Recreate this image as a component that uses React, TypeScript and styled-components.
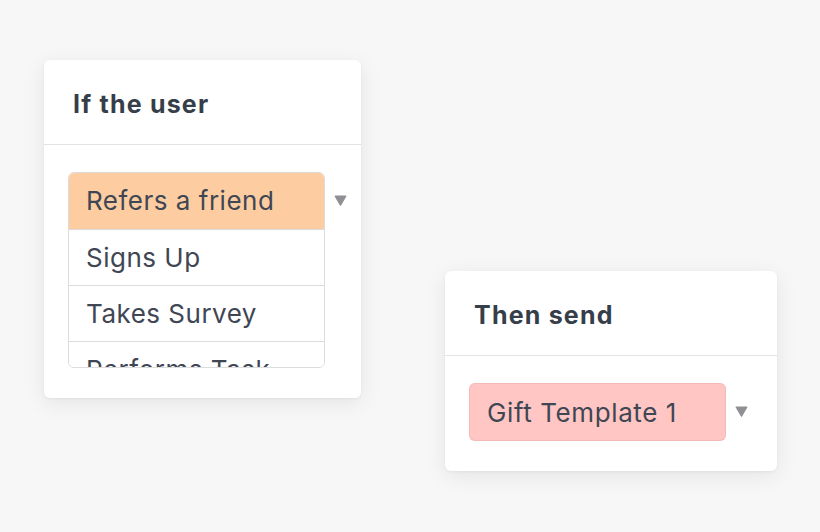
import React from "react";
import styled, { createGlobalStyle } from "styled-components";

const GlobalStyle = createGlobalStyle`
    html, body {
        margin: 0;
        padding: 0;
        background: #f7f7f7;
    }

    body {
        font-family: Inter, "Noto Sans", sans-serif;
        color: #3b4350;
    }
`;

interface CardProps {
    $width: number;
    $offset?: number;
};

interface OptionProps {
    $selected?: boolean;
};

interface SelectProps {
    $color: string;
};

const Page = styled.main`
    display: flex;
    align-items: flex-start;
    gap: 84px;
    padding: 60px 0 0 44px;
    width: 820px;
    height: 532px;
    box-sizing: border-box;
`;

const Card = styled.section<CardProps>`
    width: ${({ $width }) => $width}px;
    margin-top: ${({ $offset = 0 }) => $offset}px;
    background: #ffffff;
    border-radius: 6px;
    box-shadow: 0 5px 22px rgba(0, 0, 0, 0.08), 0 1px 3px rgba(0, 0, 0, 0.05);
    box-sizing: border-box;
`;

const CardHeader = styled.header`
    height: 85px;
    display: flex;
    align-items: center;
    padding: 4px 29px 0;
    border-bottom: 1px solid #e2e2e2;
    font-size: 25px;
    font-weight: 700;
    color: #363e4a;
    letter-spacing: 1.2px;
    box-sizing: border-box;
`;

const CardBody = styled.div`
    display: flex;
    align-items: flex-start;
    gap: 9px;
    padding: 27px 0 30px 24px;
`;

const OptionList = styled.ul`
    width: 257px;
    height: 196px;
    margin: 0;
    padding: 0;
    list-style: none;
    border: 1px solid #dcdcdc;
    border-radius: 6px;
    overflow: hidden;
    box-sizing: border-box;
`;

const Option = styled.li<OptionProps>`
    height: ${({ $selected }) => ($selected ? 58 : 56)}px;
    display: flex;
    align-items: center;
    padding: 0 17px;
    font-size: 26px;
    letter-spacing: 0.5px;
    color: #3f4654;
    background: ${({ $selected }) => ($selected ? "#fdcda1" : "#ffffff")};
    border-bottom: 1px solid #dcdcdc;
    box-sizing: border-box;
    white-space: nowrap;
    margin-top: ${({ $selected }) => ($selected ? -1 : 0)}px;
`;

const Select = styled.div<SelectProps>`
    width: 257px;
    height: 58px;
    display: flex;
    align-items: center;
    padding: 0 17px;
    font-size: 26px;
    letter-spacing: 0.6px;
    color: #3f4654;
    background: ${({ $color }) => $color};
    border: 1px solid rgba(0, 0, 0, 0.06);
    border-radius: 6px;
    box-sizing: border-box;
`;

const Caret = styled.svg`
    width: 13px;
    height: 11px;
    flex-shrink: 0;
`;

const CaretSlot = styled.div`
    height: 57px;
    display: flex;
    align-items: center;
`;

const DownCaret = () => (
    <CaretSlot>
        <Caret viewBox="0 0 13 11">
            <path d="M1.2 0.5 H11.8 Q12.8 0.5 12.3 1.4 L7.2 10.2 Q6.5 11.2 5.8 10.2 L0.7 1.4 Q0.2 0.5 1.2 0.5 Z" fill="#8f9094" />
        </Caret>
    </CaretSlot>
);

const triggers = ["Refers a friend", "Signs Up", "Takes Survey", "Performs Task"];

export default function App() {
    return (
        <>
            <GlobalStyle />
            <Page>
                <Card $width={317}>
                    <CardHeader>If the user</CardHeader>
                    <CardBody>
                        <OptionList>
                            {triggers.map((label, index) => (
                                <Option key={label} $selected={index === 0}>
                                    {label}
                                </Option>
                            ))}
                        </OptionList>
                        <DownCaret />
                    </CardBody>
                </Card>
                <Card $width={332} $offset={211}>
                    <CardHeader>Then send</CardHeader>
                    <CardBody>
                        <Select $color="#ffc6c3">Gift Template 1</Select>
                        <DownCaret />
                    </CardBody>
                </Card>
            </Page>
        </>
    );
}
